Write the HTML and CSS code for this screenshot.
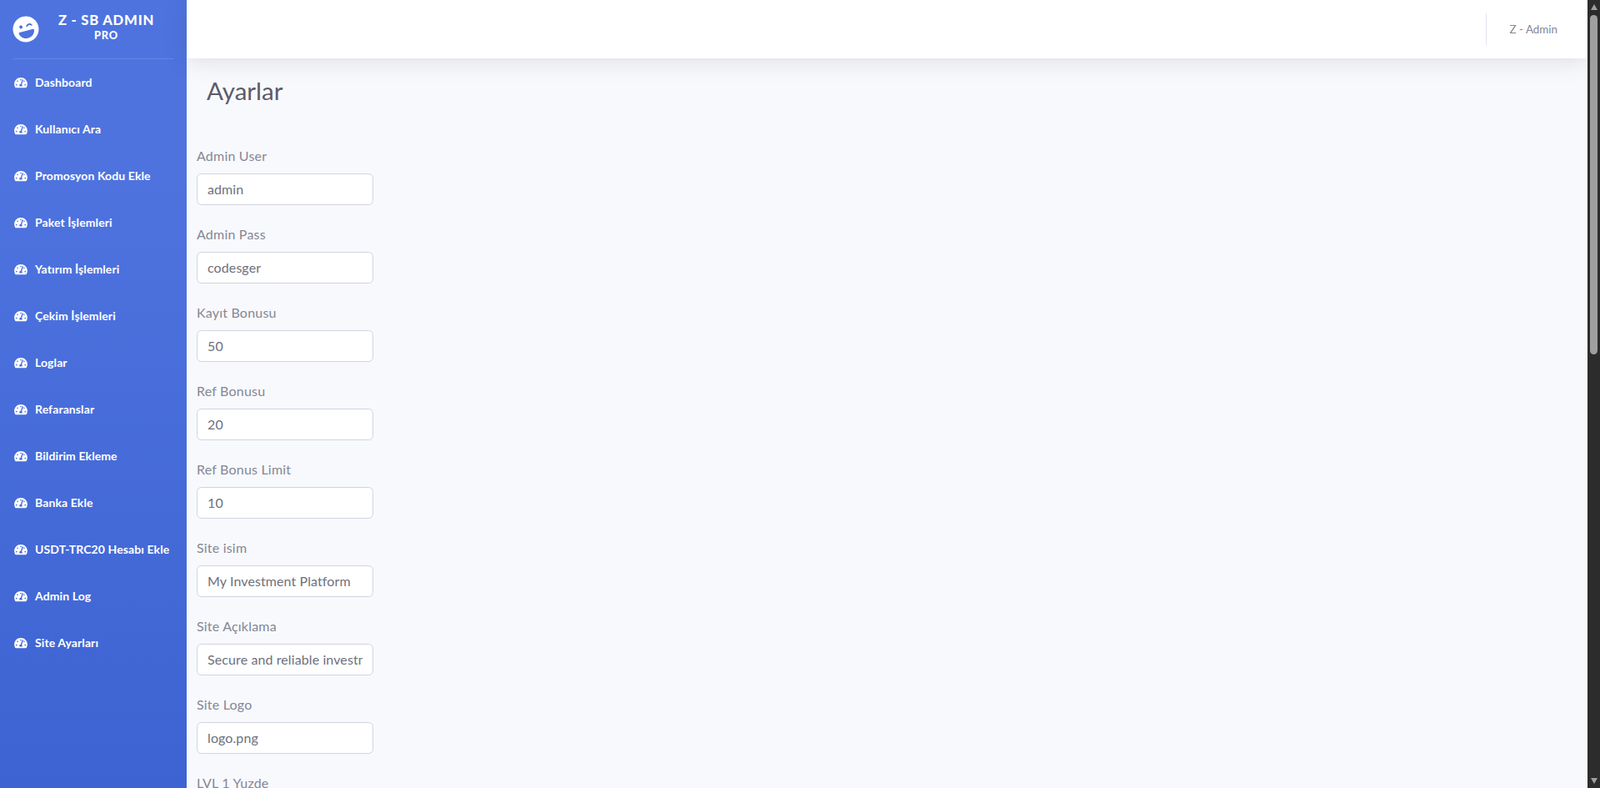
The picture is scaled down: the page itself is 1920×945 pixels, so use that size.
FILE: index.html
```html
<!DOCTYPE html>
<html>
<head>
    <meta charset="utf-8">
    <title>Ayarlar</title>
    <link rel="stylesheet" href="styles.css">
</head>
<body>
<svg class="icon-defs" width="0" height="0">
    <symbol id="icon-gauge" viewBox="0 0 576 512"><path fill="currentColor" d="M288 32C128.94 32 0 160.94 0 320c0 52.8 14.25 102.26 39.06 144.8 5.61 9.62 16.3 15.2 27.44 15.2h443c11.14 0 21.83-5.58 27.44-15.2C561.75 422.26 576 372.8 576 320c0-159.06-128.94-288-288-288zm0 64c14.71 0 26.58 10.13 30.32 23.65-1.11 2.26-2.64 4.23-3.45 6.67l-9.22 27.67c-5.13 3.49-10.97 6.01-17.64 6.01-17.67 0-32-14.33-32-32S270.33 96 288 96zM96 384c-17.67 0-32-14.33-32-32s14.33-32 32-32 32 14.33 32 32-14.33 32-32 32zm48-160c-17.67 0-32-14.33-32-32s14.33-32 32-32 32 14.33 32 32-14.33 32-32 32zm246.77-72.41l-61.33 184C343.13 347.33 352 364.54 352 384c0 11.72-3.38 22.55-8.88 32H232.88c-5.5-9.45-8.88-20.28-8.88-32 0-33.94 26.5-61.43 59.9-63.59l61.34-184.01c4.17-12.56 17.73-19.45 30.36-15.17 12.57 4.19 19.35 17.77 15.17 30.36zm14.66 57.2l15.52-46.55c3.47-1.29 7.13-2.23 11.05-2.23 17.67 0 32 14.33 32 32s-14.33 32-32 32c-11.38-.01-20.89-6.28-26.57-15.22zM480 384c-17.67 0-32-14.33-32-32s14.33-32 32-32 32 14.33 32 32-14.33 32-32 32z"/></symbol>
</svg>
<div class="wrapper">
    <!--sidebar-->
    <aside class="sidebar">
        <a class="sidebar-brand" href="#">
            <svg class="brand-icon" viewBox="0 0 496 512"><path fill="currentColor" d="M248 8C111 8 0 119 0 256s111 248 248 248 248-111 248-248S385 8 248 8zm20.1 198.1c4-25.2 34.2-42.1 59.9-42.1s55.9 16.9 59.9 42.1c1.7 11.1-11.4 18.3-19.8 10.8l-9.5-8.5c-14.8-13.2-46.2-13.2-61 0L288 217c-8.4 7.4-21.6.3-19.9-10.9zM168 160c17.7 0 32 14.3 32 32s-14.3 32-32 32-32-14.3-32-32 14.3-32 32-32zm230.9 146C390 377 329.4 432 256 432h-16c-73.4 0-134-55-142.9-126-1.2-9.5 6.3-18 15.9-18h270c9.6 0 17.1 8.4 15.9 18z"/></svg>
            <div class="brand-text">Z - SB Admin <span class="brand-sub">Pro</span></div>
        </a>
        <hr class="sidebar-divider">
        <nav class="sidebar-nav">
            <a class="nav-link" href="#"><svg class="nav-icon"><use href="#icon-gauge"/></svg><span>Dashboard</span></a>
            <a class="nav-link" href="#"><svg class="nav-icon"><use href="#icon-gauge"/></svg><span>Kullanıcı Ara</span></a>
            <a class="nav-link" href="#"><svg class="nav-icon"><use href="#icon-gauge"/></svg><span>Promosyon Kodu Ekle</span></a>
            <a class="nav-link" href="#"><svg class="nav-icon"><use href="#icon-gauge"/></svg><span>Paket İşlemleri</span></a>
            <a class="nav-link" href="#"><svg class="nav-icon"><use href="#icon-gauge"/></svg><span>Yatırım İşlemleri</span></a>
            <a class="nav-link" href="#"><svg class="nav-icon"><use href="#icon-gauge"/></svg><span>Çekim İşlemleri</span></a>
            <a class="nav-link" href="#"><svg class="nav-icon"><use href="#icon-gauge"/></svg><span>Loglar</span></a>
            <a class="nav-link" href="#"><svg class="nav-icon"><use href="#icon-gauge"/></svg><span>Refaranslar</span></a>
            <a class="nav-link" href="#"><svg class="nav-icon"><use href="#icon-gauge"/></svg><span>Bildirim Ekleme</span></a>
            <a class="nav-link" href="#"><svg class="nav-icon"><use href="#icon-gauge"/></svg><span>Banka Ekle</span></a>
            <a class="nav-link" href="#"><svg class="nav-icon"><use href="#icon-gauge"/></svg><span>USDT-TRC20 Hesabı Ekle</span></a>
            <a class="nav-link" href="#"><svg class="nav-icon"><use href="#icon-gauge"/></svg><span>Admin Log</span></a>
            <a class="nav-link" href="#"><svg class="nav-icon"><use href="#icon-gauge"/></svg><span>Site Ayarları</span></a>
        </nav>
    </aside>
    <div class="content-wrapper">
        <!--topbar-->
        <header class="topbar">
            <div class="topbar-divider"></div>
            <span class="topbar-user">Z - Admin</span>
        </header>
        <h1 class="page-title">Ayarlar</h1>
        <form class="settings-form">
            <div class="form-group"><label>Admin User</label><input class="form-control" type="text" value="admin"></div>
            <div class="form-group"><label>Admin Pass</label><input class="form-control" type="text" value="codesger"></div>
            <div class="form-group"><label>Kayıt Bonusu</label><input class="form-control" type="text" value="50"></div>
            <div class="form-group"><label>Ref Bonusu</label><input class="form-control" type="text" value="20"></div>
            <div class="form-group"><label>Ref Bonus Limit</label><input class="form-control" type="text" value="10"></div>
            <div class="form-group"><label>Site isim</label><input class="form-control" type="text" value="My Investment Platform"></div>
            <div class="form-group"><label>Site Açıklama</label><input class="form-control" type="text" value="Secure and reliable investment platform"></div>
            <div class="form-group"><label>Site Logo</label><input class="form-control" type="text" value="logo.png"></div>
            <div class="form-group"><label>LVL 1 Yuzde</label></div>
        </form>
    </div>
</div>
<!--scrollbar drawn by hand, the browser hides the real one-->
<div class="scrollbar">
    <span class="scroll-arrow scroll-up"></span>
    <div class="scroll-track"><div class="scroll-thumb"></div></div>
    <span class="scroll-arrow scroll-down"></span>
</div>
</body>
</html>
```

FILE: styles.css
```css
html{overflow: hidden;}
body,h1{margin: 0;}
body{
	height: 945px;
	overflow: hidden;
	font-family: "Lato","Liberation Sans",sans-serif;
	font-size: 16px;
	line-height: 1.5;
	color: #858796;
	background: #f8f9fc;
}
a{text-decoration: none;color: inherit;}
.icon-defs{position: absolute;}

.wrapper{
	display: flex;
	min-height: 2115px;
	padding-right: 15px;
}

.sidebar{
	width: 224px;
	flex-shrink: 0;
	color: #fff;
	background: linear-gradient(180deg,#4e73df 10%,#224abe 100%);
}
.sidebar-brand{
	height: 70px;
	padding: 0 16px 0 15px;
	display: flex;
	align-items: center;
	box-sizing: border-box;
}
.brand-icon{
	width: 32px;
	height: 32px;
	flex-shrink: 0;
	transform: rotate(-15deg);
}
.brand-text{
	flex: 1;
	padding-bottom: 4px;
	font-size: 16.6px;
	font-weight: 900;
	line-height: 18px;
	letter-spacing: .8px;
	text-align: center;
	text-transform: uppercase;
}
.brand-sub{
	display: block;
	font-size: 12.8px;
}
.sidebar-divider{
	margin: 0 16px;
	border: 0;
	border-top: 1px solid rgba(255,255,255,.15);
}
.nav-link{
	height: 56px;
	padding: 0 17px;
	display: flex;
	align-items: center;
	font-size: 14px;
	font-weight: 700;
	letter-spacing: .1px;
	white-space: nowrap;
}
.nav-link span{padding-bottom: 2px;}
.nav-icon{
	width: 16px;
	height: 14px;
	margin-right: 9px;
	flex-shrink: 0;
}

.content-wrapper{
	flex: 1;
	min-width: 0;
}
.topbar{
	height: 70px;
	padding-right: 36px;
	display: flex;
	align-items: center;
	justify-content: flex-end;
	background: #fff;
	box-shadow: 0 2.4px 28px 0 rgba(58,59,69,.15);
}
.topbar-divider{
	width: 1px;
	height: 38px;
	margin-right: 27px;
	background: #e3e6f0;
}
.topbar-user{font-size: 13.4px;}
.page-title{
	padding: 22px 24px 0;
	font-size: 29.5px;
	font-weight: 400;
	line-height: 34px;
	color: #5a5c69;
}
.settings-form{
	padding: 49px 12px 1px;
}
.form-group{margin-bottom: 23px;}
.form-group label{
	display: block;
	margin-bottom: 9px;
	letter-spacing: .2px;
}
.form-control{
	display: block;
	width: 212px;
	height: 38px;
	padding: 5px 12px 7px;
	box-sizing: border-box;
	font: inherit;
	letter-spacing: .1px;
	color: #6e707e;
	background: #fff;
	border: 1px solid #d1d3e2;
	border-radius: 5.6px;
}

.scrollbar{
	position: fixed;
	top: 0;
	right: 0;
	width: 15px;
	height: 100%;
	display: flex;
	flex-direction: column;
	background: #2c2c2c;
}
.scroll-arrow{
	height: 17px;
	flex-shrink: 0;
	display: flex;
	align-items: center;
	justify-content: center;
}
.scroll-arrow:after{
	content: '';
	border-left: 4.5px solid transparent;
	border-right: 4.5px solid transparent;
}
.scroll-up:after{border-bottom: 7px solid #9f9f9f;}
.scroll-down:after{border-top: 7px solid #9f9f9f;}
.scroll-track{flex: 1;padding: 1px 3px;}
.scroll-thumb{
	height: 407px;
	background: #9f9f9f;
	border-radius: 4.5px;
}
```
